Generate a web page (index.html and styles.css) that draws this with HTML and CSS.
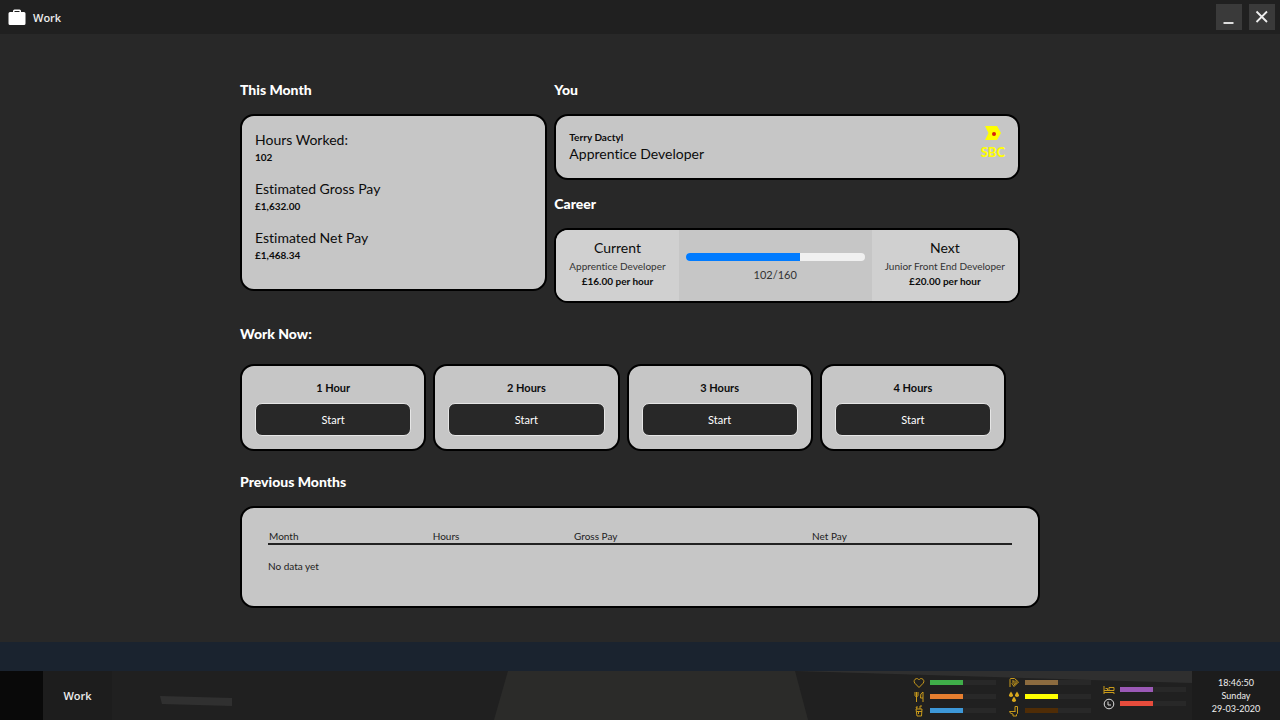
FILE: index.html
```
<!DOCTYPE html>
<html lang="en">
<head>
    <meta charset="UTF-8">
    <meta name="viewport" content="width=device-width, initial-scale=1.0">
    <title>Work</title>
    <link rel="stylesheet" href="styles.css">
</head>
<body>
    <div class="window">
        <header class="title-bar">
            <svg class="app-icon" viewBox="0 0 18 17" aria-hidden="true">
                <path fill="#fff" fill-rule="evenodd" d="M5 3V2Q5 0.500 6.500 0.500H11.500Q13 0.500 13 2V3H16Q17.500 3 17.500 4.500V14.500Q17.500 16 16 16H2Q0.500 16 0.500 14.500V4.500Q0.500 3 2 3ZM6.500 3H11.500V2H6.500Z"/>
            </svg>
            <h1>Work</h1>
            <button class="window-button" aria-label="Minimise">
                <svg viewBox="0 0 26 26"><path d="M7.500 19H17.500" stroke="#ddd" stroke-width="2"/></svg>
            </button>
            <button class="window-button" aria-label="Close">
                <svg viewBox="0 0 26 26"><path d="M7.500 7.500L18 18M18 7.500L7.500 18" stroke="#eee" stroke-width="1.800"/></svg>
            </button>
        </header>

        <main class="content">
            <div class="overview">
                <section>
                    <h2>This Month</h2>
                    <dl class="card stats">
                        <dt>Hours Worked:</dt>
                        <dd>102</dd>
                        <dt>Estimated Gross Pay</dt>
                        <dd>£1,632.00</dd>
                        <dt>Estimated Net Pay</dt>
                        <dd>£1,468.34</dd>
                    </dl>
                </section>

                <div>
                    <section>
                        <h2>You</h2>
                        <div class="card you">
                            <div>
                                <div class="strong">Terry Dactyl</div>
                                <div class="label">Apprentice Developer</div>
                            </div>
                            <div class="company">
                                <svg viewBox="0 0 16 14" aria-hidden="true">
                                    <path d="M0 0H12L16 7L12 14H0L3.500 7Z" fill="#ff0"/>
                                    <circle cx="9" cy="8" r="2" fill="#d8200c"/>
                                </svg>
                                <span>SBC</span>
                            </div>
                        </div>
                    </section>

                    <section class="career-section">
                        <h2>Career</h2>
                        <div class="card career">
                            <div class="job">
                                <div class="label">Current</div>
                                <div class="job-title">Apprentice Developer</div>
                                <div class="strong">£16.00 per hour</div>
                            </div>
                            <div class="career-progress">
                                <progress id="career-bar" max="160" value="102"></progress>
                                <label for="career-bar">102/160</label>
                            </div>
                            <div class="job">
                                <div class="label">Next</div>
                                <div class="job-title">Junior Front End Developer</div>
                                <div class="strong">£20.00 per hour</div>
                            </div>
                        </div>
                    </section>
                </div>
            </div>

            <section class="work-now">
                <h2>Work Now:</h2>
                <div class="shifts">
                    <div class="card shift">
                        <h3>1 Hour</h3>
                        <button>Start</button>
                    </div>
                    <div class="card shift">
                        <h3>2 Hours</h3>
                        <button>Start</button>
                    </div>
                    <div class="card shift">
                        <h3>3 Hours</h3>
                        <button>Start</button>
                    </div>
                    <div class="card shift">
                        <h3>4 Hours</h3>
                        <button>Start</button>
                    </div>
                </div>
            </section>

            <section class="previous">
                <h2>Previous Months</h2>
                <div class="card history">
                    <table>
                        <thead>
                            <tr>
                                <th class="col-month">Month</th>
                                <th class="col-hours">Hours</th>
                                <th class="col-gross">Gross Pay</th>
                                <th>Net Pay</th>
                            </tr>
                        </thead>
                        <tbody>
                            <tr>
                                <td colspan="4">No data yet</td>
                            </tr>
                        </tbody>
                    </table>
                </div>
            </section>
        </main>
    </div>

    <footer class="taskbar">
        <!-- wallpaper showing through the bar -->
        <svg class="wallpaper" viewBox="0 0 1280 49" preserveAspectRatio="none" aria-hidden="true">
            <path d="M508 0H795L808 49H494Z" fill="#2b2b29"/>
            <path d="M160 25L232 27V35L162 33Z" fill="#303030"/>
            <path d="M795 0H1192V12L960 5Z" fill="#2f2f2f"/>
        </svg>
        <button class="start" aria-label="Start menu"></button>
        <button class="task">Work</button>

        <div class="needs">
            <div class="need-column">
                <div class="need">
                    <svg viewBox="0 0 12 12"><path d="M6 10.500L1.800 6.200C-0.500 3.500 3.500 -0.500 6 2.800C8.500 -0.500 12.500 3.500 10.200 6.200Z"/></svg>
                    <progress class="health" aria-label="Health" max="100" value="50"></progress>
                </div>
                <div class="need">
                    <svg viewBox="0 0 12 12"><path d="M2 1V4.500Q2 5.500 3.500 5.500T5 4.500V1M3.500 1V11M10 11V1Q7 2 7.500 7H10"/></svg>
                    <progress class="food" aria-label="Food" max="100" value="50"></progress>
                </div>
                <div class="need">
                    <svg viewBox="0 0 12 12"><path d="M3 4H9L8.500 11H4ZM3.500 6.500H9M5.500 6.500V9M7 4V1H9M4 4L3 2H5"/></svg>
                    <progress class="drink" aria-label="Drink" max="100" value="50"></progress>
                </div>
            </div>
            <div class="need-column">
                <div class="need">
                    <svg viewBox="0 0 12 12"><path d="M2 10V2.500Q2 1.500 3 1.500H6.500L10.500 5L6 9.500L4 6.500L7 3.500M5.500 7L8.500 4M4 4H6M6 8L9 5.500"/></svg>
                    <progress class="hygiene" aria-label="Hygiene" max="100" value="50"></progress>
                </div>
                <div class="need">
                    <svg viewBox="0 0 12 12"><path class="solid" d="M3 0.500Q5.500 4 5 5Q3 7 1 5Q0.500 4 3 0.500ZM9 0.500Q11.500 4 11 5Q9 7 7 5Q6.500 4 9 0.500ZM6 5.500Q8.500 9 8 10Q6 12 4 10Q3.500 9 6 5.500Z"/></svg>
                    <progress class="bladder" aria-label="Bladder" max="100" value="50"></progress>
                </div>
                <div class="need">
                    <svg viewBox="0 0 12 12"><path d="M7 6.500V1.500H9.500V8.500L8.500 9.500V11H5V9Q2 9 1.500 6.500H7.500"/></svg>
                    <progress class="bowel" aria-label="Bowel" max="100" value="50"></progress>
                </div>
            </div>
            <div class="need-column">
                <div class="need">
                    <svg viewBox="0 0 12 12"><path d="M1 2V10M1 8.500H11V10M1 6.500H11V3.500H6V6M2.500 4.500H4.500V6.500"/></svg>
                    <progress class="sleep" aria-label="Sleep" max="100" value="50"></progress>
                </div>
                <div class="need">
                    <svg class="clock-icon" viewBox="0 0 12 12"><circle cx="6" cy="6" r="4.800"/><path d="M5 3.500V7H8"/></svg>
                    <progress class="time" aria-label="Free time" max="100" value="50"></progress>
                </div>
            </div>
        </div>

        <div class="clock">
            <div>18:46:50</div>
            <div>Sunday</div>
            <div>29-03-2020</div>
        </div>
    </footer>
</body>
</html>
```
FILE: styles.css
```
* {
    box-sizing: border-box;
}

body {
    margin: 0;
    min-height: 100vh;
    display: flex;
    flex-direction: column;
    background-color: #1a232f;
    font-family: Lato, sans-serif;
    font-variant-ligatures: none;
    color: #0c0c0c;
}

h1, h2, h3, dl, dd {
    margin: 0;
}

button {
    font-family: inherit;
    cursor: pointer;
}

.window {
    flex: 1;
    margin-bottom: 29px;
    background-color: #282828;
}

.title-bar {
    height: 34px;
    display: flex;
    align-items: center;
    gap: 7px;
    padding: 0 5px 0 8px;
    background-color: #202020;
}

.title-bar h1 {
    flex: 1;
    font-family: "Open Sans", sans-serif;
    font-size: 11px;
    font-weight: 600;
    color: #eee;
}

.app-icon {
    width: 18px;
    height: 17px;
}

.window-button {
    width: 26px;
    height: 26px;
    padding: 0;
    border: none;
    background-color: #3a3a3a;
}

.window-button svg {
    display: block;
}

.content {
    max-width: 800px;
    margin: 0 auto;
    padding: 46px 0 34px;
}

h2 {
    margin-bottom: 14px;
    font-size: 14px;
    line-height: 20px;
    font-weight: 900;
    color: #fff;
}

.card {
    border: 2px solid #000;
    border-radius: 14px;
    background-color: #c6c6c6;
    overflow: hidden;
}

.overview {
    display: grid;
    grid-template-columns: 33fr 50fr;
    align-items: start;
    gap: 7px;
    padding-right: 20px;
}

.label, .stats dt {
    font-size: 14px;
    line-height: 20px;
}

.strong, .stats dd {
    font-size: 10px;
    line-height: 14px;
    font-weight: bold;
}

.stats {
    padding: 14px 13px 12px;
}

.stats dd {
    margin-bottom: 15px;
}

.you {
    display: flex;
    justify-content: space-between;
    padding: 14px 13px;
}

.company {
    display: flex;
    flex-direction: column;
    align-items: center;
    color: #ff0;
    font-size: 13px;
    line-height: 24px;
    font-weight: 900;
}

.company svg {
    width: 16px;
    height: 14px;
    margin-top: -4px;
}

.career-section {
    margin-top: 14px;
}

.career {
    display: flex;
    text-align: center;
}

.job {
    padding: 8px 13px 13px;
    background-color: #d0d0d0;
}

.job-title {
    font-size: 10px;
    line-height: 16px;
    color: #333;
}

.career-progress {
    flex: 1;
    display: flex;
    flex-direction: column;
    padding: 23px 7px 0;
    font-size: 11px;
    line-height: 28px;
    color: #333;
}

progress {
    display: block;
    width: 100%;
    height: 8px;
    border: none;
    appearance: none;
    -webkit-appearance: none;
}

.career-progress progress {
    border-radius: 4px;
    overflow: hidden;
}

.career-progress progress::-webkit-progress-bar {
    background-color: #f0f0f0;
}

.career-progress progress::-webkit-progress-value {
    background-color: #007bff;
}

.work-now, .previous {
    margin-top: 21px;
}

.work-now h2 {
    margin-bottom: 20px;
}

.shifts {
    display: grid;
    grid-template-columns: repeat(4, 1fr);
    gap: 7px;
    padding-right: 34px;
}

.shift {
    padding: 13px;
    text-align: center;
}

.shift h3 {
    margin-bottom: 6px;
    font-size: 11px;
    line-height: 18px;
    font-weight: bold;
}

.shift button {
    width: 100%;
    height: 33px;
    display: block;
    border: 1px solid #e6e6e6;
    border-radius: 7px;
    background-color: #282828;
    color: #fff;
    font-size: 11px;
}

.history {
    padding: 21px 26px 33px;
}

.history table {
    width: 100%;
    table-layout: fixed;
    border-collapse: collapse;
    font-size: 10px;
    line-height: 14px;
    color: #222;
}

.history th {
    padding: 0 1px;
    border-bottom: 2px solid #222;
    font-weight: normal;
    text-align: left;
}

.history td {
    padding: 14px 0 0;
}

.col-month {
    width: 22%;
}

.col-hours {
    width: 19%;
}

.col-gross {
    width: 32%;
}

.taskbar {
    position: relative;
    height: 49px;
    display: flex;
    background-color: #202020;
    color: #eee;
}

.wallpaper {
    position: absolute;
    inset: 0;
    width: 100%;
    height: 100%;
}

.start, .task, .needs, .clock {
    position: relative;
}

.start {
    width: 43px;
    border: none;
    background-color: #090909;
}

.task {
    width: 69px;
    padding: 0;
    border: none;
    background-color: #1d1d1d;
    color: #eee;
    font-family: "Open Sans", sans-serif;
    font-size: 11px;
    font-weight: 600;
}

.needs {
    display: flex;
    gap: 12px;
    margin-left: auto;
    padding: 2px 6px 0 0;
}

.need-column {
    display: flex;
    flex-direction: column;
    justify-content: center;
    gap: 2px;
}

.need {
    display: flex;
    align-items: center;
    gap: 5px;
}

.need svg {
    width: 12px;
    height: 12px;
    fill: none;
    stroke: #c99a1b;
}

.need svg .solid {
    fill: #d9a81c;
    stroke: none;
}

.need .clock-icon {
    stroke: #ddd;
}

.need progress {
    width: 66px;
    height: 5px;
}

.need progress::-webkit-progress-bar {
    background-color: #282828;
}

.health::-webkit-progress-value {
    background-color: #3fae49;
}

.food::-webkit-progress-value {
    background-color: #e67e2f;
}

.drink::-webkit-progress-value {
    background-color: #3d98d8;
}

.hygiene::-webkit-progress-value {
    background-color: #8c6b3f;
}

.bladder::-webkit-progress-value {
    background-color: #ff0;
}

.bowel::-webkit-progress-value {
    background-color: #4f2c06;
}

.sleep::-webkit-progress-value {
    background-color: #9b59b6;
}

.time::-webkit-progress-value {
    background-color: #e74c3c;
}

.clock {
    width: 88px;
    padding-top: 5px;
    background-color: #1c1c1c;
    font-size: 9px;
    line-height: 13px;
    text-align: center;
}
```
